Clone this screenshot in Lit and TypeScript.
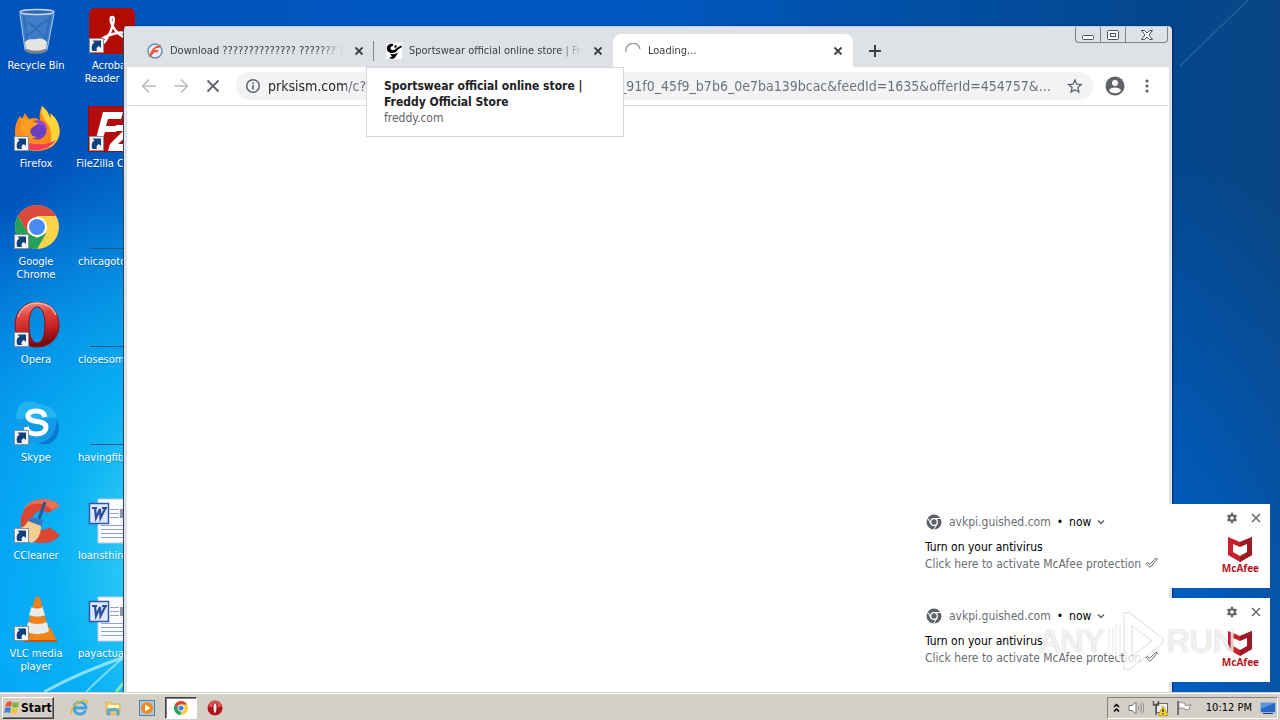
import { LitElement, html, css, svg, nothing, TemplateResult } from 'lit';
import { customElement, property } from 'lit/decorators.js';
import { classMap } from 'lit/directives/class-map.js';

interface Shortcut {
  label: string;
  icon: TemplateResult;
  linked?: boolean;
  file?: boolean;
}

interface Tab {
  title: string;
  icon: TemplateResult;
  active?: boolean;
  divider?: boolean;
}

const arrowBadge = svg`
  <rect x="2.500" y="30.500" width="14" height="14" fill="#f4f4f4" stroke="#8a8f98"/>
  <path d="M5.500 43c-1.500-3-1-7 2-8.500L5.500 32.500H14V40l-2.200-2C9.500 39 9 41 10 43z" fill="#12407f"/>`;

const wordPage = svg`
  <path d="M11 1h34v44H11z" fill="#fbfcff" stroke="#c3cbe0"/>
  <path d="M23 11.500h9M23 15.500h9M23 19.500h9M14 27.500h27M14 31.500h27M14 35.500h27M14 39.500h27" stroke="#8fa3d6"/>
  <path d="M33 11h9v9h-9z" fill="#8c97ad"/>
  <path d="M2.500 5.500h19v20h-19z" fill="#dfe8fa" stroke="#3257a8" stroke-width="1.500"/>
  <path d="M5 10h5M8 10l1 10 4-9 .5 9 5-10M15 10h5" fill="none" stroke="#2a4f9f" stroke-width="2.200"/>`;

const blankFile = svg`<path d="M3 44.500h42" stroke="#075987"/>`;

const shortcuts: Shortcut[] = [
  {
    label: 'Recycle Bin',
    icon: svg`
      <path d="M8 5l5 38c4 3 18 3 22 0l7-38z" fill="#5f93d0" opacity=".65"/>
      <path d="M12 8l4 32M38 8l-6 32M14 28c8-3 14-14 22-16M16 14c6 5 14 10 18 18" stroke="#2456a0" fill="none" opacity=".45" stroke-width="2"/>
      <path d="M13 34c3-4 8-2 11-3s8-1 11 3l-1 8c-4 3-16 3-20 0z" fill="#e6e4df"/>
      <path d="M14 42c4 3 16 3 20 0" fill="none" stroke="#77808b" stroke-width="3"/>
      <ellipse cx="25" cy="4" rx="17" ry="2.500" fill="#2b65b4" stroke="#c7d3e0" stroke-width="1.500"/>
      <path d="M8 6l5 36M42 6l-7 36" stroke="#d3e2f1" opacity=".8"/>`,
  },
  {
    label: 'Firefox',
    linked: true,
    icon: svg`
      <path d="M30 0c5 4 7 8 8 12 1-2 1-3 0-5 8 6 11 15 9 23-3 10-12 15-22 15C12 45 3 37 3 26c0-7 2-12 5-16l2 3 3-6 4 6c5-2 9-1 11 2-1-6 0-11 2-15z" fill="#ff8a1e"/>
      <path d="M30 0c5 4 7 8 8 12 1-2 1-3 0-5 8 6 11 15 9 23-2 6-6 10-10 12 2-6 4-14 0-22-3-5-9-10-7-20z" fill="#ffd43a"/>
      <path d="M4 30c4 10 13 15 22 14 7-1 14-4 18-10-6 3-12 5-19 4-9 0-17-2-21-8z" fill="#f53d58"/>
      <circle cx="25" cy="24" r="9.500" fill="#6a3fc4"/>
      <path d="M25 14c6 0 10 4 10 10-3-4-6-6-10-5z" fill="#9147d6"/>
      <path d="M9 12c5 0 9 1 11 3l6 2c0 2-5 3-7 6-2 4 1 8 6 8-8 4-16-2-16-10z" fill="#ff9d22"/>`,
  },
  {
    label: 'Google\nChrome',
    linked: true,
    icon: svg`
      <circle cx="25" cy="23" r="22" fill="#fdd34b"/>
      <path d="M5.950 12a22 22 0 0 1 38.100 0H25L15.500 28.500z" fill="#dc4a3e"/>
      <path d="M5.950 12L15.500 28.500 25 34l9.500-5L25 45A22 22 0 0 1 5.950 12z" fill="#24a05a"/>
      <circle cx="25" cy="23" r="10" fill="#fff"/>
      <circle cx="25" cy="23" r="8" fill="#4a8af4"/>`,
  },
  {
    label: 'Opera',
    linked: true,
    icon: svg`
      <defs>
        <linearGradient id="opera-red" x1="0" y1="0" x2=".2" y2="1">
          <stop offset="0" stop-color="#f6a196"/>
          <stop offset=".35" stop-color="#e0453b"/>
          <stop offset=".7" stop-color="#c41f22"/>
          <stop offset="1" stop-color="#7a0a0e"/>
        </linearGradient>
      </defs>
      <path fill-rule="evenodd" d="M25 0c13 0 22 10 22 23s-9 22-22 22S3 36 3 23 12 0 25 0zm0 5c-5 0-8 7-8 18s3 18 8 18 8-7 8-18-3-18-8-18z" fill="url(#opera-red)" stroke="#8f1014" stroke-width="1"/>
      <path d="M6 15C9 5 17 1 25 1s15 3 19 12" fill="none" stroke="#fbc7c0" stroke-width="1.500" opacity=".8"/>`,
  },
  {
    label: 'Skype',
    linked: true,
    icon: svg`
      <path d="M14 2c5-1 9 0 12 2 12-1 19 6 19 17 4 8 1 20-9 23-5 1-9 0-11-1C13 43 5 36 5 25 1 15 5 4 14 2z" fill="#129ce8"/>
      <path d="M14 2c5-1 9 0 12 2 10 0 17 5 19 13-12 3-28 1-40 2C3 11 6 4 14 2z" fill="#22b4f0"/>
      <path d="M45 20c4 10 1 21-9 24-5 1-9 0-11-1 10 0 19-8 20-23z" fill="#0a78d0"/>
      <path d="M33 17c-1-5-5-6-9-6-5 0-8 2-8 5 0 8 18 3 18 11 0 5-5 7-10 7-6 0-9-3-10-7" fill="none" stroke="#fff" stroke-width="5"/>`,
  },
  {
    label: 'CCleaner',
    linked: true,
    icon: svg`
      <path d="M48 8C36-4 12 0 9 21c-2 14 9 25 22 24 7 0 13-3 17-8l-11-8c-5 5-15 4-16-6-1-9 8-13 15-8z" fill="#dd4632"/>
      <path d="M48 8C38-3 18 0 12 11c10-8 20-7 28 1z" fill="#ee7052"/>
      <path d="M33 4l-6 17" stroke="#275a97" stroke-width="3"/>
      <path d="M18 19l13 3-2 8-13-5z" fill="#3877b9"/>
      <path d="M16 23l13 5c0 9-4 15-10 17L3 31c6 0 11-3 13-8z" fill="#f3cf93"/>`,
  },
  {
    label: 'VLC media\nplayer',
    linked: true,
    icon: svg`
      <path d="M13 31h25l7 14H14z" fill="#f08518"/>
      <path d="M12 44h33v2H12z" fill="#c2580a"/>
      <path d="M23 2c2-2 3-2 5 0l9 33c-4 5-19 5-23 0z" fill="#f0821b"/>
      <path d="M19.500 11c4 2 8 2 11 0l2.500 8c-4 2-11 2-16 0zM16 26c6 2.500 13 2.500 19 0l2 9c-4 4-19 4-23 0z" fill="#e9eaec"/>`,
  },
  {
    label: 'Acrobat\nReader DC',
    linked: true,
    icon: svg`
      <rect x="2" width="46" height="46" rx="6" fill="#b30b00"/>
      <path d="M13 36c-3-3 6-9 17-11s12 6 5 3C26 23 21 10 25 9s1 12-6 23c-2 3-4 5-6 4z" fill="none" stroke="#fff" stroke-width="2.500"/>`,
  },
  {
    label: 'FileZilla Client',
    linked: true,
    icon: svg`
      <path d="M1 0h47v46H1z" fill="#b30d0d"/>
      <path d="M1.500.5h46v45h-46z" fill="none" stroke="#7c0707" stroke-dasharray="2 2"/>
      <path d="M16 6h20l-2 7H21l-2 7h12l-2 6H18l-5 14H7zM29 19h18l-2 6-14 13h11l-2 7H21l2-7 13-13h-9z" fill="#fff"/>`,
  },
  { label: 'chicagoto', icon: blankFile, file: true },
  { label: 'closesome', icon: blankFile, file: true },
  { label: 'havingfitn', icon: blankFile, file: true },
  { label: 'loansthing', icon: wordPage, file: true },
  { label: 'payactual', icon: wordPage, file: true },
];

const closeIcon = html`<svg width="10" height="10" viewBox="0 0 10 10"><path d="M1.500 1.500l7 7M8.500 1.500l-7 7" stroke="currentColor" stroke-width="1.800"/></svg>`;

const tabs: Tab[] = [
  {
    title: 'Download ?????????????? ??????? ?????',
    divider: true,
    icon: html`<svg width="16" height="16" viewBox="0 0 16 16">
      <circle cx="8" cy="8" r="7" fill="#e8eef7" stroke="#6d8fb5" stroke-width="1.500"/>
      <path d="M2 14C4 7 6 3 14 2l-2 3c-3 0-4 .5-4.500 2H12l-2 2.500H7C5.500 12 4 13.500 2 14z" fill="#ee5a36"/>
    </svg>`,
  },
  {
    title: 'Sportswear official online store | Freddy',
    icon: html`<svg width="16" height="16" viewBox="0 0 16 16">
      <path d="M0 0h16v16H0z" fill="#fff"/>
      <path d="M7 1C2 0-1 5 2 8.500c3 2.500 8 2 10-2L16 4l-1-1.500-5 3C8 8 5 7.500 4.500 5.500 4.500 4 5.500 3 7 3zM9 2l2 1-1 2-2-1zM4 10.500c3 1.500 7 .5 9-2l-3 4.500c-1 3-5 3.500-7 2l3-1.500z"/>
    </svg>`,
  },
  {
    title: 'Loading...',
    active: true,
    icon: html`<svg width="16" height="16" viewBox="0 0 16 16">
      <path d="M1 9A7 7 0 0 1 15 6" fill="none" stroke="#9a9da1" stroke-width="1.500"/>
    </svg>`,
  },
];

const quickLaunch = [
  {
    name: 'Internet Explorer',
    icon: svg`
      <path d="M15.500 11.500A6 6 0 1 1 16 9H5" fill="none" stroke="#3fa3dd" stroke-width="2.800"/>
      <path d="M2 15C-1 11 6 3 13 1.500c4-1 5 1 3.500 4" fill="none" stroke="#e5b92c" stroke-width="1.300"/>`,
  },
  {
    name: 'Explorer',
    icon: svg`
      <path d="M2 3h5l1 2h8v10H2z" fill="#efcf6c" stroke="#c9a63f" stroke-width=".6"/>
      <path d="M4 6h11v3H4z" fill="#fff7cf"/>
      <path d="M3 16v-5c0-2 12-2 12 0v5h-2v-4H6v4z" fill="#62b3d8" stroke="#3a86b0" stroke-width=".5"/>`,
  },
  {
    name: 'Media Player',
    icon: svg`
      <rect x="1.500" y="1.500" width="15" height="15" fill="#a9cbe7" stroke="#4b7fac"/>
      <circle cx="9" cy="9" r="6" fill="#f28a17"/>
      <path d="M7 5.500v7l5.500-3.500z" fill="#fff"/>`,
  },
  {
    name: 'Chrome',
    active: true,
    icon: svg`
      <circle cx="9" cy="9" r="7" fill="#fccf3d"/>
      <path d="M2.900 5.500a7 7 0 0 1 12.200 0H9L6 11z" fill="#dc4437"/>
      <path d="M2.900 5.500L6 11l3 1.500L8.500 16A7 7 0 0 1 2.900 5.500z" fill="#1ea362"/>
      <circle cx="9" cy="9" r="3.400" fill="#fff"/><circle cx="9" cy="9" r="2.600" fill="#4284f3"/>`,
  },
  {
    name: 'Opera',
    icon: svg`
      <circle cx="9" cy="9" r="7.500" fill="#b8121c"/>
      <path d="M2 7c2-7 12-7 14 0-4 2-10 2-14 0z" fill="#dc564f"/>
      <ellipse cx="9" cy="9" rx="2" ry="5.500" fill="#f2e6e3" stroke="#6d070c" stroke-width=".8"/>`,
  },
];

@customElement('desktop-shortcut')
export class DesktopShortcut extends LitElement {
  @property({ attribute: false }) shortcut!: Shortcut;

  static styles = css`
    :host {
      display: block;
      height: 90px;
      padding-top: 8px;
    }

    .shortcut {
      display: flex;
      flex-direction: column;
      align-items: center;
      gap: 3px;
      width: 100%;
      padding: 0;
      border: 0;
      background: none;
      color: #fff;
      font: inherit;
      line-height: 13px;
      white-space: pre;
      text-shadow: 0 1px 1px rgba(0, 20, 70, 0.3);
    }

    .name.file {
      align-self: flex-start;
      padding-left: 3px;
    }

    svg {
      display: block;
    }
  `;

  render() {
    const { label, icon, linked, file } = this.shortcut;
    return html`
      <button class="shortcut">
        <svg width="48" height="48" viewBox="0 0 48 48">${icon}${linked ? arrowBadge : nothing}</svg>
        <span class=${classMap({ name: true, file: !!file })}>${label}</span>
      </button>
    `;
  }
}

@customElement('browser-window')
export class BrowserWindow extends LitElement {
  static styles = css`
    :host {
      box-sizing: border-box;
      display: flex;
      flex-direction: column;
      padding: 0 3px;
      border-top: 1px solid #b9cde6;
      border-left: 1px solid #33475f;
      border-radius: 4px 4px 0 0;
      background: #dee1e6;
      box-shadow: 1px 0 2px rgba(0, 20, 60, 0.6);
      color: #3c4043;
    }

    button {
      display: grid;
      place-items: center;
      padding: 0;
      border: 0;
      background: none;
      color: inherit;
      font: inherit;
    }

    svg {
      display: block;
      flex: none;
    }

    .caption {
      position: absolute;
      top: 0;
      right: 4px;
      display: flex;
      height: 15px;
      border: 1px solid #7d828c;
      border-top: 0;
      border-radius: 0 0 4px 4px;
    }

    .caption button {
      width: 25px;
      border-right: 1px solid #7d828c;
    }

    .caption button:last-child {
      width: 41px;
      border: 0;
    }

    .tabs {
      display: flex;
      height: 33px;
      padding: 7px 8px 0;
    }

    .tab {
      position: relative;
      box-sizing: border-box;
      display: flex;
      flex: 0 1 239px;
      min-width: 0;
      align-items: center;
      gap: 7px;
      padding: 0 7px 0 12px;
    }

    .tab.active {
      flex-basis: 240px;
      border-radius: 8px 8px 0 0;
      background: #fff;
    }

    .divider::after {
      content: '';
      position: absolute;
      right: 0;
      width: 1px;
      height: 20px;
      background: #80868b;
    }

    .title {
      display: block;
      flex: 1;
      min-width: 0;
      overflow: hidden;
      text-align: left;
      white-space: nowrap;
      line-height: 20px;
      mask-image: linear-gradient(to right, #000 85%, transparent);
    }

    .close {
      width: 16px;
      height: 16px;
    }

    .add {
      width: 28px;
      height: 34px;
      margin-left: 8px;
      color: #3c4043;
    }

    .toolbar {
      display: flex;
      align-items: center;
      gap: 4px;
      height: 38px;
      padding: 0 8px;
      border-bottom: 1px solid #dadce0;
      background: #fff;
      color: #5f6368;
    }

    .toolbar button {
      width: 28px;
      height: 28px;
    }

    .toolbar button:disabled {
      color: #babcbe;
    }

    .omnibox {
      display: flex;
      flex: 1;
      align-items: center;
      min-width: 0;
      height: 28px;
      margin: 0 4px 0 5px;
      padding: 0 4px 0 9px;
      border-radius: 14px;
      background: #f1f3f4;
    }

    .omnibox input {
      flex: 1;
      min-width: 0;
      margin: 0 7px;
      padding: 0;
      border: 0;
      outline: 0;
      background: linear-gradient(to right, #202124 78px, #6a6e73 78px);
      background-clip: text;
      -webkit-background-clip: text;
      color: transparent;
      font: inherit;
      font-size: 14px;
      line-height: 20px;
      text-overflow: ellipsis;
    }

    .page {
      flex: 1;
      background: #fff;
    }

    .hovercard {
      position: absolute;
      top: 40px;
      left: 242px;
      box-sizing: border-box;
      width: 258px;
      padding: 10px 17px;
      border: 1px solid #d5d7da;
      background: #fff;
      color: #5f6368;
      font-size: 12px;
      line-height: 16px;
    }

    .hovercard strong {
      display: block;
      color: #202124;
    }
  `;

  private renderTab(tab: Tab) {
    return html`
      <div class=${classMap({ tab: true, active: !!tab.active, divider: !!tab.divider })}>
        ${tab.icon}
        <button class="title">${tab.title}</button>
        <button class="close" aria-label="Close tab">${closeIcon}</button>
      </div>
    `;
  }

  render() {
    return html`
      <div class="tabs">
        ${tabs.map((tab) => this.renderTab(tab))}
        <button class="add" aria-label="New tab">
          <svg width="12" height="12" viewBox="0 0 12 12"><path d="M6 0v12M0 6h12" stroke="currentColor" stroke-width="2"/></svg>
        </button>
      </div>
      <div class="caption">
        <button aria-label="Minimize">
          <svg width="14" height="12" viewBox="0 0 14 12"><rect x="1.500" y="6.500" width="11" height="4" rx="1" fill="#fff" stroke="#4b5160"/></svg>
        </button>
        <button aria-label="Restore">
          <svg width="14" height="12" viewBox="0 0 14 12">
            <rect x="1.500" y="1.500" width="11" height="9" rx="1" fill="#fff" stroke="#4b5160"/>
            <rect x="4.500" y="4.500" width="5" height="3" fill="#fff" stroke="#4b5160"/>
          </svg>
        </button>
        <button aria-label="Close">
          <svg width="14" height="12" viewBox="0 0 14 12">
            <path d="M1.500 1.500h3L7 4l2.500-2.500h3L9 6l3.500 4.500h-3L7 8l-2.500 2.500h-3L5 6z" fill="#fff" stroke="#4b5160"/>
          </svg>
        </button>
      </div>
      <div class="toolbar">
        <button aria-label="Back" disabled>
          <svg width="16" height="16" viewBox="0 0 16 16"><path d="M15 8H2M8 1.500L1.500 8 8 14.500" fill="none" stroke="currentColor" stroke-width="1.600"/></svg>
        </button>
        <button aria-label="Forward" disabled>
          <svg width="16" height="16" viewBox="0 0 16 16"><path d="M1 8h13M8 1.500L14.500 8 8 14.500" fill="none" stroke="currentColor" stroke-width="1.600"/></svg>
        </button>
        <button aria-label="Stop">
          <svg width="14" height="14" viewBox="0 0 14 14"><path d="M1.500 1.500l11 11M12.500 1.500l-11 11" stroke="currentColor" stroke-width="1.800"/></svg>
        </button>
        <div class="omnibox">
          <svg width="16" height="16" viewBox="0 0 16 16">
            <circle cx="8" cy="8" r="6.300" fill="none" stroke="currentColor" stroke-width="1.500"/>
            <path d="M7.200 7h1.600v4.500H7.200zM7.200 4.500h1.600V6H7.200z" fill="currentColor"/>
          </svg>
          <input type="text" aria-label="Address" value="prksism.com/c?l=eb5e4a0c_72d1_4cde_a8c2_55fa21c8_91f0_45f9_b7b6_0e7ba139bcac&feedId=1635&offerId=454757&..." />
          <button aria-label="Bookmark this page">
            <svg width="16" height="16" viewBox="0 0 16 16">
              <path d="M8 2l1.800 4.200 4.500.4-3.400 3 1 4.400L8 11.700 4.100 14l1-4.400-3.400-3 4.500-.4z" fill="none" stroke="currentColor" stroke-width="1.300"/>
            </svg>
          </button>
        </div>
        <button aria-label="Profile">
          <svg width="20" height="20" viewBox="0 0 20 20">
            <circle cx="10" cy="10" r="9.500" fill="currentColor"/>
            <circle cx="10" cy="7" r="3" fill="#fff"/>
            <path d="M4 14.500c1-4 11-4 12 0-2.500 3.500-9.500 3.500-12 0z" fill="#fff"/>
          </svg>
        </button>
        <button aria-label="Menu">
          <svg width="4" height="14" viewBox="0 0 4 14" fill="currentColor">
            <circle cx="2" cy="2" r="1.600"/><circle cx="2" cy="7" r="1.600"/><circle cx="2" cy="12" r="1.600"/>
          </svg>
        </button>
      </div>
      <div class="page"></div>
      <div class="hovercard">
        <strong>Sportswear official online store | Freddy Official Store</strong>
        <span>freddy.com</span>
      </div>
    `;
  }
}

@customElement('toast-notification')
export class ToastNotification extends LitElement {
  static styles = css`
    :host {
      box-sizing: border-box;
      display: flex;
      justify-content: space-between;
      height: 84px;
      padding: 8px 6px 0 15px;
      background: #fff;
      color: #000;
      font-size: 12px;
    }

    button {
      display: grid;
      place-items: center;
      width: 16px;
      height: 12px;
      padding: 0;
      border: 0;
      background: none;
      color: #5f6368;
    }

    .source {
      display: flex;
      align-items: center;
      gap: 6px;
      height: 20px;
      margin-bottom: 7px;
    }

    .origin,
    .text {
      color: #6a6e73;
    }

    p {
      margin: 0;
      line-height: 17px;
    }

    .side {
      display: flex;
      flex-direction: column;
      align-items: flex-end;
      gap: 12px;
    }

    .actions {
      display: flex;
      gap: 8px;
    }

    .logo {
      display: flex;
      flex-direction: column;
      align-items: center;
      color: #b5161e;
      font: bold 10px/12px 'Open Sans', sans-serif;
      padding-right: 5px;
    }
  `;

  render() {
    return html`
      <div>
        <div class="source">
          <svg width="18" height="18" viewBox="0 0 18 18">
            <circle cx="9" cy="9" r="7.500" fill="#5f6368"/>
            <path d="M9 5.500h7M6 11L2.500 5M12 11l-3.500 6" stroke="#fff"/>
            <circle cx="9" cy="9" r="3.300" fill="#5f6368" stroke="#fff" stroke-width="1.300"/>
          </svg>
          <span class="origin">avkpi.guished.com</span>
          <span>•</span>
          <span>now</span>
          <svg width="8" height="6" viewBox="0 0 8 6"><path d="M1 1.500l3 3 3-3" fill="none" stroke="#5f6368" stroke-width="1.500"/></svg>
        </div>
        <p>Turn on your antivirus</p>
        <p class="text">
          Click here to activate McAfee protection
          <svg width="13" height="10" viewBox="0 0 13 10"><path d="M1 5.500l2-1 1.500 2L10.500.5l2 .3L5 9.500z" fill="none" stroke="#6a6e73"/></svg>
        </p>
      </div>
      <div class="side">
        <div class="actions">
          <button aria-label="Settings">
            <svg width="12" height="12" viewBox="0 0 12 12">
              <circle cx="6" cy="6" r="2.800" fill="none" stroke="currentColor" stroke-width="2"/>
              <path d="M6 .8v2M6 9.200v2M1.500 3.400l1.900 1.100M8.600 7.500l1.900 1.100M1.500 8.600l1.900-1.100M8.600 4.500l1.900-1.100" stroke="currentColor" stroke-width="2.200"/>
            </svg>
          </button>
          <button aria-label="Dismiss">
            <svg width="10" height="10" viewBox="0 0 10 10"><path d="M1 1l8 8M9 1L1 9" stroke="currentColor" stroke-width="1.400"/></svg>
          </button>
        </div>
        <div class="logo">
          <svg width="24" height="26" viewBox="0 0 24 26">
            <path d="M0 1l12 5 12-5v18l-12 7-12-7z" fill="#c9202b"/>
            <path d="M12 6l12-5v18l-12 7z" fill="#9c1b24"/>
            <path d="M5 8l7 3 7-3v8l-7 4-7-4z" fill="#fff"/>
          </svg>
          <span>McAfee</span>
        </div>
      </div>
    `;
  }
}

@customElement('task-bar')
export class TaskBar extends LitElement {
  static styles = css`
    :host {
      box-sizing: border-box;
      display: flex;
      align-items: center;
      justify-content: space-between;
      height: 28px;
      padding: 3px 2px 1px;
      border-top: 1px solid #d4d0c8;
      background: #d4d0c8;
      box-shadow: inset 0 1px #fff;
      color: #000;
    }

    button {
      display: grid;
      place-items: center;
      padding: 0;
      border: 0;
      background: none;
    }

    .launch,
    .tray {
      display: flex;
      align-items: center;
    }

    .start {
      display: flex;
      align-items: center;
      gap: 1px;
      box-sizing: border-box;
      width: 52px;
      height: 22px;
      margin-right: 9px;
      padding: 0 1px;
      border: 1px solid;
      border-color: #fff #404040 #404040 #fff;
      box-shadow: inset -1px -1px #808080;
      font: inherit;
      font-size: 12px;
      font-weight: bold;
    }

    .app {
      box-sizing: border-box;
      width: 32px;
      height: 22px;
      margin-right: 2px;
    }

    .app.active {
      border: 1px solid;
      border-color: #404040 #fff #fff #404040;
      background: #fff;
      box-shadow: inset 1px 1px #808080;
    }

    .tray {
      box-sizing: border-box;
      gap: 8px;
      height: 22px;
      padding: 0 1px 0 5px;
      border: 1px solid;
      border-color: #808080 #fff #fff #808080;
    }

    .clock {
      padding-left: 6px;
    }
  `;

  render() {
    return html`
      <div class="launch">
        <button class="start">
          <svg width="16" height="16" viewBox="0 0 16 16">
            <path d="M3 2c2-1 3-1 5 0L7 7C5 6 3 6 1 7z" fill="#e8572a"/>
            <path d="M9 2c2 1 4 1 6 0l-1 5c-2 1-4 1-6 0z" fill="#7bb843"/>
            <path d="M1 8c2-1 4-1 6 0l-1 5c-2-1-4-1-6 0z" fill="#3f86d0"/>
            <path d="M8 8c2 1 4 1 6 0l-1 5c-2 1-4 1-6 0z" fill="#f5c22e"/>
          </svg>
          Start
        </button>
        ${quickLaunch.map(
          (app) => html`
            <button class=${classMap({ app: true, active: !!app.active })} aria-label=${app.name}>
              <svg width="18" height="18" viewBox="0 0 18 18">${app.icon}</svg>
            </button>
          `
        )}
      </div>
      <div class="tray">
        <button aria-label="Show hidden icons">
          <svg width="7" height="10" viewBox="0 0 7 10"><path d="M1 4l2.500-2.500L6 4M1 8.500L3.500 6 6 8.500" fill="none" stroke="#000" stroke-width="1.500"/></svg>
        </button>
        <button aria-label="Volume">
          <svg width="16" height="16" viewBox="0 0 16 16">
            <path d="M1 5.500h3L8 2v12l-4-3.500H1z" fill="#fff" stroke="#777"/>
            <path d="M10 5.500c1 1 1 4 0 5M12 3.500c2 2 2 7 0 9M14 2c2.500 3 2.500 9 0 12" fill="none" stroke="#888"/>
          </svg>
        </button>
        <button aria-label="Network">
          <svg width="16" height="16" viewBox="0 0 16 16">
            <path d="M4.500 3.500h11v9h-11z" fill="#ededed" stroke="#666"/>
            <path d="M1.500 1v4h5V1M4 5v10" fill="none" stroke="#444" stroke-width="1.300"/>
            <path d="M11 6l5 9.500H6z" fill="#ffd42a" stroke="#b08b00" stroke-width=".7"/>
            <path d="M11 9v3M11 13v1.300" stroke="#222" stroke-width="1.300"/>
          </svg>
        </button>
        <button aria-label="Action Center">
          <svg width="16" height="16" viewBox="0 0 16 16">
            <path d="M2 1v14" stroke="#555" stroke-width="1.500"/>
            <path d="M3 2.500c3-1 4 1 6 1v1.500c2 1 4 .5 6-.5-1 2-2 4-2 5-2 1-4 0-5-1-2-1-4-.5-5 0z" fill="#fff" stroke="#888"/>
          </svg>
        </button>
        <span class="clock">10:12 PM</span>
        <button aria-label="Show desktop">
          <svg width="16" height="14" viewBox="0 0 16 14">
            <path d="M.5 1.500h15v10H.5z" fill="#2468c4" stroke="#9eb4d0"/>
            <path d="M1 2h14L1 8z" fill="#5595e0"/>
            <path d="M3 12.500h10" stroke="#213b66"/>
          </svg>
        </button>
      </div>
    `;
  }
}

@customElement('app-root')
export class AppRoot extends LitElement {
  static styles = css`
    :host {
      display: flex;
      flex-direction: column;
      height: 100vh;
      overflow: hidden;
      font-family: 'DejaVu Sans Condensed', 'Noto Sans', sans-serif;
      font-size: 11px;
    }

    .desktop {
      position: relative;
      flex: 1;
      min-height: 0;
      overflow: hidden;
      background:
        radial-gradient(ellipse 320px 440px at 200px 560px, #4fe0f8 0%, rgba(10, 180, 245, 0.9) 45%, rgba(0, 140, 235, 0) 100%),
        radial-gradient(ellipse 520px 460px at 0 660px, #009cf8 0%, rgba(0, 140, 240, 0.8) 55%, rgba(0, 90, 205, 0) 100%),
        radial-gradient(ellipse 300px 500px at 1120px 640px, #0064d0, rgba(0, 80, 180, 0)),
        linear-gradient(to right, #0054bc, #0058c0 50%, #04468c 92%, #0a4684);
    }

    .streaks {
      position: absolute;
      inset: 0;
      width: 100%;
      height: 100%;
    }

    .shortcuts {
      display: grid;
      grid-auto-flow: column;
      grid-template-rows: repeat(7, 98px);
      grid-template-columns: 72px 72px;
      column-gap: 3px;
    }

    .window {
      position: absolute;
      inset: 26px 108px 0 123px;
    }

    .toasts {
      position: absolute;
      right: 10px;
      bottom: 10px;
      display: flex;
      flex-direction: column;
      gap: 10px;
      width: 360px;
    }

    .brand {
      position: absolute;
      right: 44px;
      bottom: 20px;
      display: flex;
      align-items: center;
      gap: 2px;
      color: rgba(255, 255, 255, 0.75);
      font: 32px/62px 'Liberation Sans', sans-serif;
      text-shadow: 0 0 2px rgba(90, 90, 90, 0.4);
      pointer-events: none;
    }
  `;

  render() {
    return html`
      <main class="desktop">
        <svg class="streaks">
          <path d="M44 692Q80 672 130 655" fill="none" stroke="#a5ebff" stroke-width="3" opacity=".8"/>
          <path d="M86 692Q104 674 130 652" fill="none" stroke="#a5ebff" stroke-width="2" opacity=".7"/>
          <path d="M116 692l10-12" stroke="#7fe8a4" stroke-width="3"/>
          <path d="M1180 66L1248 0" stroke="#5f8fc0" stroke-width="2" opacity=".25"/>
        </svg>
        <div class="shortcuts">
          ${shortcuts.map((item) => html`<desktop-shortcut .shortcut=${item}></desktop-shortcut>`)}
        </div>
        <browser-window class="window"></browser-window>
        <div class="toasts">
          <toast-notification></toast-notification>
          <toast-notification></toast-notification>
        </div>
        <div class="brand">
          <span>ANY</span>
          <svg width="58" height="62" viewBox="0 0 58 62">
            <path d="M4 18v26M11 13v36" fill="none" stroke="#999" stroke-opacity=".25" stroke-width="5"/>
            <path d="M4 18v26M11 13v36" fill="none" stroke="#fff" stroke-width="3"/>
            <path fill-rule="evenodd" d="M17 3l5-1 34 27v4L22 60l-5-1zM25 16v30l20-15z" fill="#fff" fill-opacity=".75" stroke="#888" stroke-opacity=".3"/>
          </svg>
          <span>RUN</span>
        </div>
      </main>
      <task-bar></task-bar>
    `;
  }
}
